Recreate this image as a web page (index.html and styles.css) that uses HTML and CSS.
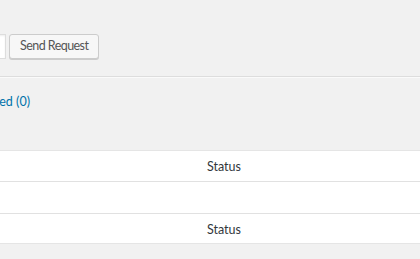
FILE: index.html
```html
<!DOCTYPE html>
<html lang="en">
<head>
  <meta charset="UTF-8" />
  <title>Requests</title>
  <link rel="stylesheet" href="styles.css">
</head>
<body>

<div class="wrap">
  <form class="request-form" onsubmit="return false;">
    <input type="email" class="request-input" placeholder="Email address" />
    <button type="submit" class="button">Send Request</button>
  </form>

  <hr class="divider" />

  <ul class="subsubsub">
    <li><a href="#">Completed (0)</a></li>
  </ul>

  <table class="list-table">
    <thead>
      <tr>
        <th class="column-user">Requester</th>
        <th class="column-status">Status</th>
      </tr>
    </thead>
    <tbody>
      <tr class="no-items">
        <td colspan="2"></td>
      </tr>
    </tbody>
    <tfoot>
      <tr>
        <th class="column-user">Requester</th>
        <th class="column-status">Status</th>
      </tr>
    </tfoot>
  </table>
</div>

</body>
</html>
```

FILE: styles.css
```css
body {
  margin: 0;
  background-color: #f1f1f1;
  font-family: Lato, "Noto Sans", sans-serif;
  font-size: 12.5px;
  color: #444;
  overflow: hidden;
}

.wrap {
  padding-top: 34px;
}

.request-form {
  display: flex;
  align-items: flex-start;
  margin-left: -114px;
}

.request-input {
  width: 120px;
  height: 25px;
  box-sizing: border-box;
  margin: 0;
  border: 1px solid #ddd;
  background-color: #fff;
  box-shadow: inset 0 1px 2px rgba(0,0,0,0.07);
  font: inherit;
  color: transparent;
}

.request-input::placeholder {
  color: transparent;
}

.button {
  margin-left: 3px;
  height: 25px;
  padding: 0 10px 1px;
  border: 1px solid #ccc;
  border-radius: 3px;
  background-color: #f7f7f7;
  box-shadow: 0 1px 0 #ccc;
  color: #555;
  font: inherit;
  letter-spacing: -0.55px;
  line-height: 22px;
  cursor: pointer;
}

.divider {
  margin: 17px 0 0;
  height: 0;
  border: 0;
  border-top: 1px solid #ddd;
  border-bottom: 1px solid #fafafa;
}

.subsubsub {
  list-style: none;
  margin: 15px 0 0;
  padding: 0;
  width: 30px;
  height: 18px;
  line-height: 18px;
  display: flex;
  justify-content: flex-end;
  white-space: nowrap;
}

.subsubsub a {
  color: #0073aa;
  text-decoration: none;
}

.list-table {
  margin: 39px 0 0 -10px;
  width: calc(100% + 20px);
  border-collapse: collapse;
  table-layout: fixed;
  background-color: #fff;
  border: 1px solid #e5e5e5;
  box-shadow: 0 1px 1px rgba(0,0,0,0.04);
}

.list-table th {
  padding: 2px 10px 0;
  text-align: left;
  font-weight: normal;
  color: #32373c;
  line-height: 18px;
}

.list-table thead th {
  height: 28px;
  border-bottom: 1px solid #e1e1e1;
}

.list-table tfoot th {
  height: 27px;
  border-top: 1px solid #e1e1e1;
}

.list-table td {
  height: 31px;
  padding: 0 10px;
}

.column-user {
  width: 186px;
  color: transparent !important;
}
```
